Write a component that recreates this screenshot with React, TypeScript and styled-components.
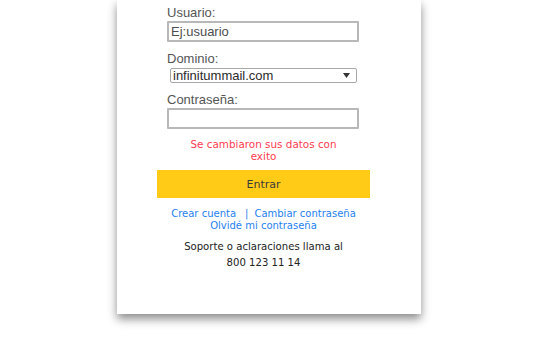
import React from 'react';
import styled, { createGlobalStyle } from 'styled-components';

const GlobalStyle = createGlobalStyle`
  html, body {
    margin: 0;
    padding: 0;
    background: #ffffff;
    overflow: hidden;
  }
  body {
    font-family: 'Liberation Sans', Arial, sans-serif;
  }
`;

const Page = styled.div`
  width: 538px;
  height: 343px;
  background: #ffffff;
`;

const Card = styled.div`
  margin-left: 117px;
  width: 304px;
  background: #ffffff;
  box-shadow: 0 5px 9px rgba(0, 0, 0, 0.45);
  padding: 5px 0 43px 40px;
  box-sizing: border-box;
`;

const Column = styled.form`
  width: 213px;
  display: flex;
  flex-direction: column;
`;

const Label = styled.label<{ gap?: number }>`
  display: block;
  margin: ${({ gap = 0 }) => gap}px 0 0 10px;
  font-family: 'Liberation Sans', Arial, sans-serif;
  font-size: 13px;
  line-height: 15px;
  color: #555555;
`;

const TextInput = styled.input`
  display: block;
  margin: 1px 0 0 10px;
  width: 192px;
  height: 21px;
  box-sizing: border-box;
  border: 2px solid #b8b8b8;
  border-radius: 1px;
  padding: 0 2px;
  font-family: 'Liberation Sans', Arial, sans-serif;
  font-size: 13px;
  color: #333333;
  background: #ffffff;
  outline: none;

  &::placeholder {
    color: #4d4d4d;
  }
`;

const SelectWrap = styled.div`
  position: relative;
  margin: 2px 0 0 13px;
  width: 187px;
  height: 15px;
`;

const Select = styled.select`
  appearance: none;
  display: block;
  width: 100%;
  height: 100%;
  box-sizing: border-box;
  border: 1px solid #a8a8a8;
  border-radius: 2px;
  padding: 0 0 0 2px;
  margin: 0;
  font-family: 'Liberation Sans', Arial, sans-serif;
  font-size: 13px;
  line-height: 13px;
  color: #2b2b2b;
  background: #ffffff;
  outline: none;
`;

const Arrow = styled.svg`
  position: absolute;
  right: 7px;
  top: 5px;
  width: 7px;
  height: 5px;
  pointer-events: none;
`;

const Message = styled.p`
  margin: 9px auto 0;
  max-width: 160px;
  font-family: 'DejaVu Sans', Verdana, sans-serif;
  font-size: 10.4px;
  line-height: 12px;
  color: #ff3b50;
  text-align: center;
`;

const Submit = styled.button`
  margin-top: 8px;
  width: 213px;
  height: 28px;
  border: none;
  border-radius: 0;
  background: #ffcb17;
  font-family: 'DejaVu Sans', Verdana, sans-serif;
  font-size: 11px;
  color: #3a3a3a;
  cursor: pointer;
`;

const Links = styled.div`
  margin-top: 10px;
  text-align: center;
  font-family: 'DejaVu Sans', Verdana, sans-serif;
  font-size: 10px;
  line-height: 12px;
  color: #1e7fef;
`;

const Link = styled.a`
  color: #1e7fef;
  text-decoration: none;
`;

const Divider = styled.span`
  margin: 0 6px 0 9px;
`;

const Support = styled.p`
  margin: 7px 0 0;
  text-align: center;
  font-family: 'DejaVu Sans', Verdana, sans-serif;
  font-size: 10.1px;
  line-height: 16px;
  color: #222222;
`;

export default function App() {
  return (
    <Page>
      <GlobalStyle />
      <Card>
        <Column onSubmit={(e) => e.preventDefault()}>
          <Label htmlFor="usuario">Usuario:</Label>
          <TextInput id="usuario" type="text" placeholder="Ej:usuario" />

          <Label htmlFor="dominio" gap={9}>
            Dominio:
          </Label>
          <SelectWrap>
            <Select id="dominio" defaultValue="infinitummail.com">
              <option value="infinitummail.com">infinitummail.com</option>
              <option value="prodigy.net.mx">prodigy.net.mx</option>
            </Select>
            <Arrow viewBox="0 0 7 5">
              <path d="M0 0 H7 L3.5 5 Z" fill="#333" />
            </Arrow>
          </SelectWrap>

          <Label htmlFor="password" gap={9}>
            Contraseña:
          </Label>
          <TextInput id="password" type="password" />

          <Message>Se cambiaron sus datos con exito</Message>

          <Submit type="submit">Entrar</Submit>

          <Links>
            <Link href="#">Crear cuenta</Link>
            <Divider>|</Divider>
            <Link href="#">Cambiar contraseña</Link>
            <br />
            <Link href="#">Olvidé mi contraseña</Link>
          </Links>

          <Support>
            Soporte o aclaraciones llama al
            <br />
            800 123 11 14
          </Support>
        </Column>
      </Card>
    </Page>
  );
}
